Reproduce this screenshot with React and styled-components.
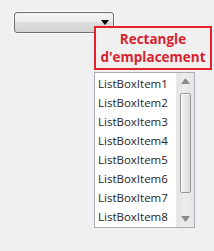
import React from "react";
import styled, { createGlobalStyle } from "styled-components";

const GlobalStyle = createGlobalStyle`
  html, body {
    margin: 0;
    padding: 0;
    background: #f0f0f0;
  }
  body {
    font-family: "Open Sans", "Noto Sans", "DejaVu Sans", sans-serif;
  }
`;

const Page = styled.div`
  width: 214px;
  height: 251px;
  box-sizing: border-box;
  padding: 12px 0 0 14px;
  background: #f0f0f0;
  overflow: hidden;
`;

const Combo = styled.div`
  width: 100px;
  height: 21px;
  box-sizing: border-box;
  border: 1px solid #707070;
  border-radius: 3px;
  background: linear-gradient(
    to bottom,
    #f4f4f4 0%,
    #ececec 48%,
    #dddddd 50%,
    #d3d3d3 100%
  );
  box-shadow: 0 0 0 1px rgba(255, 255, 255, 0.7);
  display: flex;
  align-items: center;
  justify-content: flex-end;
  padding-right: 4px;
`;

const Arrow = styled.svg`
  width: 8px;
  height: 5px;
  margin-bottom: 1px;
`;

const Column = styled.div`
  margin-left: 80px;
  margin-top: -7px;
  width: 118px;
  display: flex;
  flex-direction: column;
  position: relative;
`;

const Callout = styled.div`
  width: 118px;
  height: 44px;
  box-sizing: border-box;
  border: 2px solid #e2222e;
  background: #f0f0f0;
  color: #d8232f;
  font-weight: 700;
  font-size: 13.5px;
  line-height: 18px;
  text-align: center;
  display: flex;
  flex-direction: column;
  justify-content: center;
`;

const ListBox = styled.div`
  margin-top: 2px;
  width: 101px;
  height: 156px;
  box-sizing: border-box;
  border: 1px solid #abadb3;
  background: #ffffff;
  display: flex;
`;

const Items = styled.div`
  flex: 1;
  padding: 1px 0 0 3px;
  display: flex;
  flex-direction: column;
`;

const Item = styled.div`
  height: 19px;
  line-height: 19px;
  font-size: 11.5px;
  color: #1e1e1e;
  white-space: nowrap;
`;

const ScrollBar = styled.div`
  width: 17px;
  background: linear-gradient(to right, #e3e3e3, #ececec 40%, #e6e6e6);
  border-left: 1px solid #e9e9e9;
  display: flex;
  flex-direction: column;
  align-items: center;
`;

const ScrollButton = styled.div`
  height: 17px;
  width: 100%;
  display: flex;
  align-items: center;
  justify-content: center;
`;

const Track = styled.div`
  flex: 1;
  width: 100%;
  padding: 3px 0 18px;
  display: flex;
  justify-content: center;
`;

const Thumb = styled.div`
  width: 11px;
  height: 100px;
  box-sizing: border-box;
  border: 1px solid #979797;
  border-radius: 2px;
  background: linear-gradient(to right, #f3f3f3, #e8e8e8 50%, #d9d9d9);
  box-shadow: inset 1px 1px 0 #ffffff;
`;

const items = [
  "ListBoxItem1",
  "ListBoxItem2",
  "ListBoxItem3",
  "ListBoxItem4",
  "ListBoxItem5",
  "ListBoxItem6",
  "ListBoxItem7",
  "ListBoxItem8",
];

export default function App() {
  return (
    <>
      <GlobalStyle />
      <Page>
        <Combo>
          <Arrow viewBox="0 0 8 5">
            <polygon points="0,0 8,0 4,5" fill="#000" />
          </Arrow>
        </Combo>
        <Column>
          <Callout>
            <span>Rectangle</span>
            <span>d'emplacement</span>
          </Callout>
          <ListBox>
            <Items>
              {items.map((it) => (
                <Item key={it}>{it}</Item>
              ))}
            </Items>
            <ScrollBar>
              <ScrollButton>
                <svg width="9" height="6" viewBox="0 0 9 6">
                  <polygon points="0,6 9,6 4.5,0" fill="#8a8a8a" />
                </svg>
              </ScrollButton>
              <Track>
                <Thumb />
              </Track>
              <ScrollButton>
                <svg width="9" height="6" viewBox="0 0 9 6">
                  <polygon points="0,0 9,0 4.5,6" fill="#8a8a8a" />
                </svg>
              </ScrollButton>
            </ScrollBar>
          </ListBox>
        </Column>
      </Page>
    </>
  );
}
